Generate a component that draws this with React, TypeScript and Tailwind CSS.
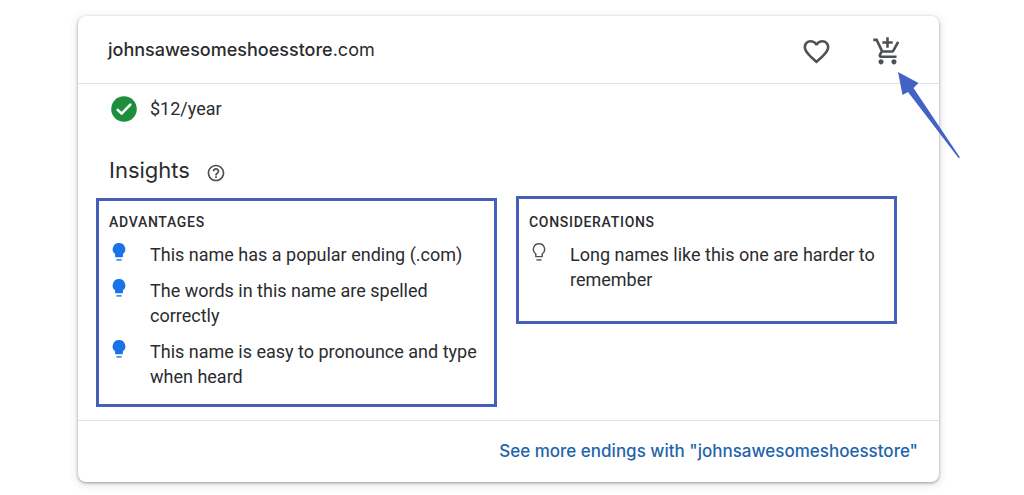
import React from "react";
import { MdAddShoppingCart, MdFavoriteBorder, MdHelpOutline } from "react-icons/md";

const domain = { name: "johnsawesomeshoesstore", tld: ".com", price: "$12/year" };

const advantages = [
  "This name has a popular ending (.com)",
  "The words in this name are spelled correctly",
  "This name is easy to pronounce and type when heard",
];
const considerations = ["Long names like this one are harder to remember"];

type InsightListProps = {
  title: string;
  items: string[];
  positive?: boolean;
  className: string;
};

/** Light bulb, filled for advantages and outlined otherwise */
function Bulb({ filled }: { filled?: boolean }) {
  const bulb = "M10 1.700a5.600 5.600 0 0 0-3.200 10.200V14.600h6.400V11.900A5.600 5.600 0 0 0 10 1.700Z";
  return (
    <svg
      viewBox="0 0 20 20"
      className={`size-5 shrink-0 ${filled ? "text-[#1a73e8]" : "text-[#4d5054]"}`}
      stroke="currentColor"
      strokeWidth="1.4"
      strokeLinejoin="round"
      aria-hidden="true"
    >
      <path d={bulb} fill={filled ? "currentColor" : "none"} />
      <path d="M7.400 17.900h5.200" fill="none" />
    </svg>
  );
}

function CheckBadge() {
  return (
    <svg viewBox="0 0 26 26" className="size-[26px]" fill="none" aria-hidden="true">
      <circle cx="13" cy="13" r="12.8" fill="#1e8e3e" />
      <path d="m6.700 13.800 3.900 3.900 8.700-9" stroke="#fff" strokeWidth="2.6" strokeLinecap="round" strokeLinejoin="round" />
    </svg>
  );
}

/** Outlined box with a heading and one bulb per insight */
function InsightList({ title, items, positive, className }: InsightListProps) {
  return (
    <section className={`border-3 border-[#4460b8] pl-[10px] pr-2 ${className}`}>
      <h3 className="text-sm leading-5 font-medium tracking-wider uppercase">{title}</h3>
      <ul className="mt-[10px] space-y-[11px]">
        {items.map((item) => (
          <li key={item} className="flex items-start gap-[21px] text-lg leading-[25px]">
            <Bulb filled={positive} />
            <span>{item}</span>
          </li>
        ))}
      </ul>
    </section>
  );
}

/** Pointer towards the cart button */
function Arrow() {
  return (
    <svg
      viewBox="0 0 62 86"
      className="absolute top-14 -right-[21px] h-[86px] w-[62px] text-[#4262c5]"
      fill="currentColor"
      aria-hidden="true"
    >
      <path d="M0 0 20.5 11 15.5 16 62 85.5 60.5 86 10 20 4.500 23Z" />
    </svg>
  );
}

export default function App() {
  return (
    <div className="bg-white pt-4 pr-[85px] pb-3 pl-[78px] font-[Roboto,sans-serif] text-[#2b2c2f]">
      <article className="relative rounded-lg bg-white shadow-[0_1px_3px_rgba(60,64,67,0.45),0_2px_10px_rgba(60,64,67,0.18)]">
        {/* Header */}
        <header className="flex items-center justify-between border-b border-[#dfe1e4] py-[13px] pr-9 pl-[30px]">
          <h1 className="font-[Inter,sans-serif] text-lg leading-6">
            <span className="font-medium">{domain.name}</span>
            {domain.tld}
          </h1>
          <div className="flex gap-10 pt-[7px] pb-[3px] text-[#4d5054]">
            <button type="button" aria-label="Add to favorites">
              <MdFavoriteBorder className="size-[31px]" />
            </button>
            <button type="button" aria-label="Add to cart">
              <MdAddShoppingCart className="size-[31px]" />
            </button>
          </div>
        </header>

        {/* Body */}
        <div className="pt-3 pr-[42px] pb-[13px] pl-[18px]">
          <p className="flex items-center gap-[13px] pl-[15px] text-lg leading-6">
            <CheckBadge />
            {domain.price}
          </p>
          <div className="mt-8 flex items-center gap-4 pl-[13px]">
            <h2 className="font-[Inter,sans-serif] text-[22px] leading-8">Insights</h2>
            <button type="button" aria-label="About insights" className="pt-[6px]">
              <MdHelpOutline className="size-5 text-[#4d5054]" />
            </button>
          </div>
          <div className="mt-[10px] grid grid-cols-[401fr_381fr] items-start gap-[19px]">
            <InsightList title="Advantages" items={advantages} positive className="mt-[2px] pt-[11px] pb-[15px]" />
            <InsightList title="Considerations" items={considerations} className="pt-[13px] pb-[29px]" />
          </div>
        </div>

        {/* Footer */}
        <footer className="border-t border-[#dfe1e4] py-[18px] pr-[21px] text-right">
          <a href="#" className="font-[Inter,sans-serif] text-[17px] leading-6 font-medium text-[#1f64ad]">
            See more endings with "{domain.name}"
          </a>
        </footer>

        <Arrow />
      </article>
    </div>
  );
}
